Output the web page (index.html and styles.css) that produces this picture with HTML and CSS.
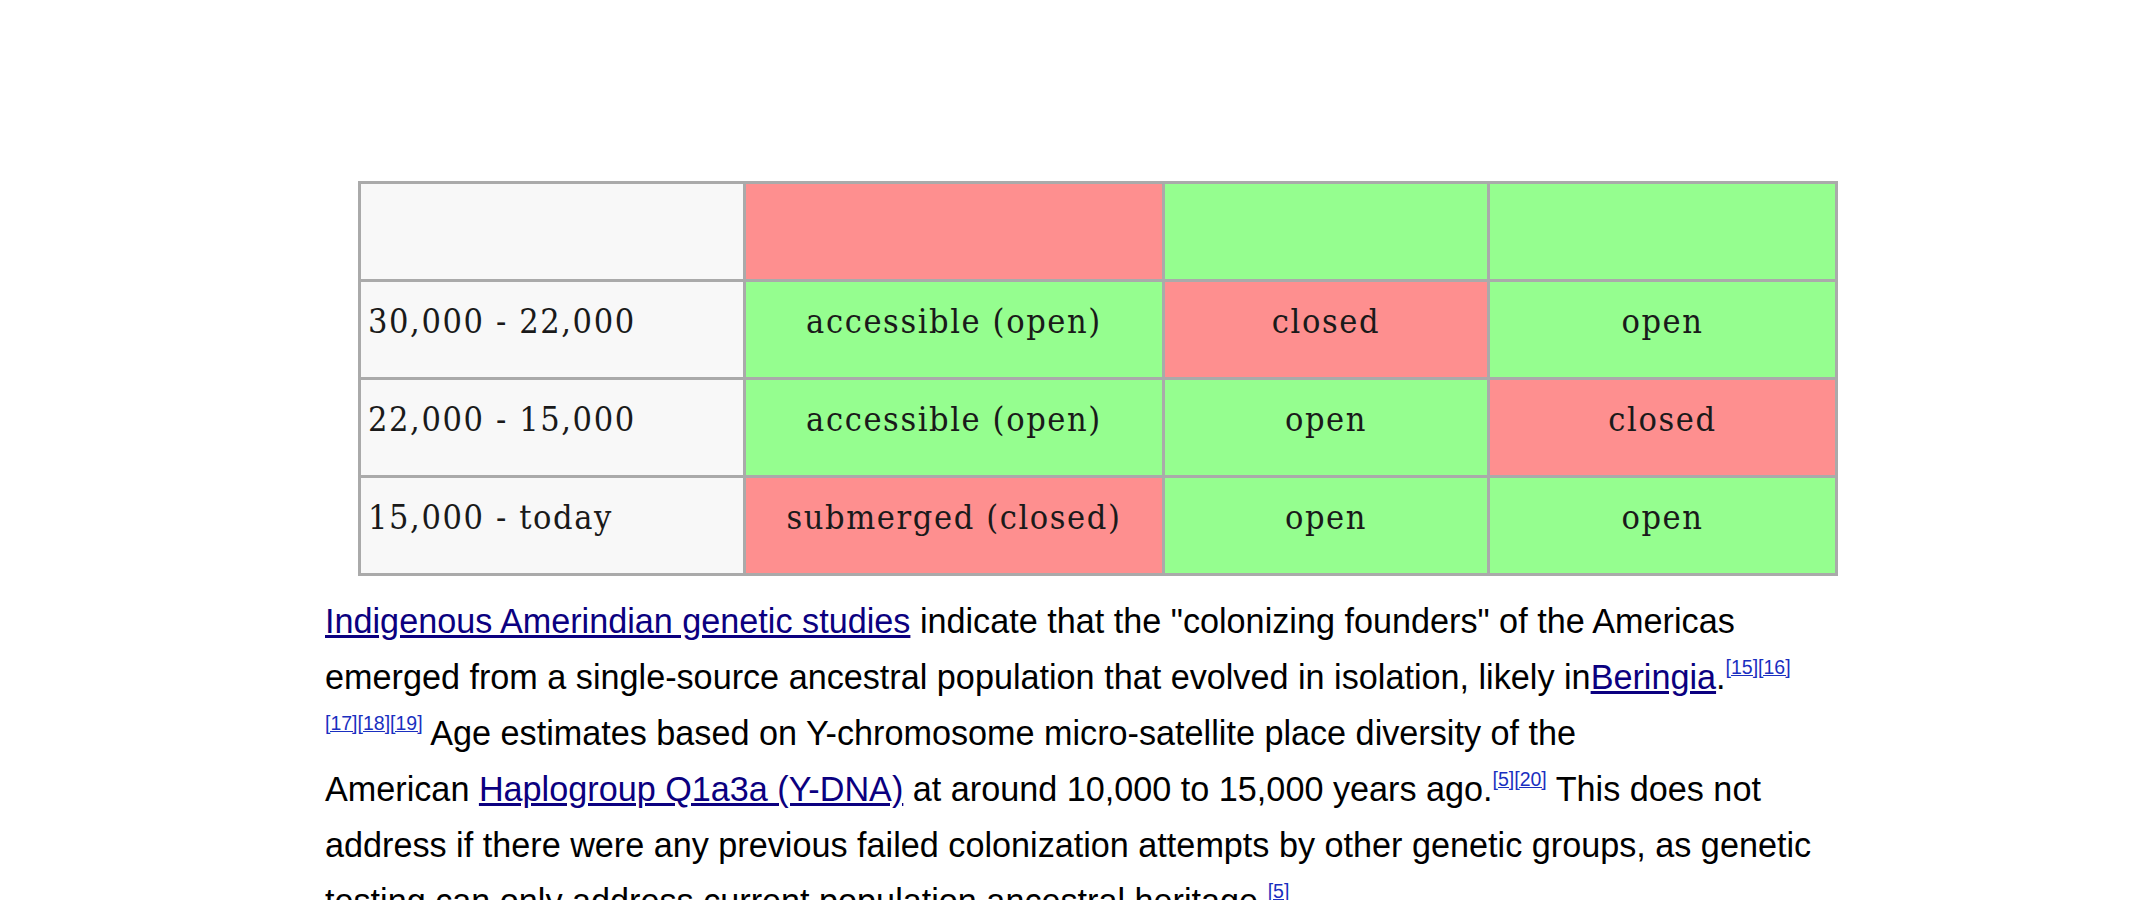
FILE: index.html
```html
<!DOCTYPE html>
<html>
<head>
<meta charset="utf-8">
<link rel="stylesheet" href="styles.css">
</head>
<body>
<div class="page">
  <table class="bridge">
    <colgroup>
      <col class="c1"><col class="c2"><col class="c3"><col class="c4">
    </colgroup>
    <tr>
      <td class="period"></td><td class="no"></td><td class="yes"></td><td class="yes"></td>
    </tr>
    <tr>
      <td class="period">30,000 - 22,000</td><td class="yes">accessible (open)</td><td class="no">closed</td><td class="yes">open</td>
    </tr>
    <tr>
      <td class="period">22,000 - 15,000</td><td class="yes">accessible (open)</td><td class="yes">open</td><td class="no">closed</td>
    </tr>
    <tr>
      <td class="period">15,000 - today</td><td class="no">submerged (closed)</td><td class="yes">open</td><td class="yes">open</td>
    </tr>
  </table>
  <p class="text"><a class="link" href="#">Indigenous Amerindian genetic studies</a> indicate that the "colonizing founders" of the Americas emerged from a single-source ancestral population that evolved in isolation, likely in<a class="link" href="#">Beringia</a>.<sup><a class="ref" href="#">[15]</a></sup><sup><a class="ref" href="#">[16]</a></sup><sup><a class="ref" href="#">[17]</a></sup><sup><a class="ref" href="#">[18]</a></sup><sup><a class="ref" href="#">[19]</a></sup> Age estimates based on Y-chromosome micro-satellite place diversity of the<br>American <a class="link" href="#">Haplogroup Q1a3a (Y-DNA)</a> at around 10,000 to 15,000 years ago.<sup><a class="ref" href="#">[5]</a></sup><sup><a class="ref" href="#">[20]</a></sup> This does not address if there were any previous failed colonization attempts by other genetic groups, as genetic testing can only address current population ancestral heritage.<sup><a class="ref" href="#">[5]</a></sup></p>
</div>
</body>
</html>
```
FILE: styles.css
```css
html, body {
  margin: 0;
  padding: 0;
  background: #ffffff;
}
.page {
  padding: 181px 0 0 325px;
  width: 1495px;
}
.bridge {
  margin-left: 33px;
  border-collapse: collapse;
  table-layout: fixed;
  width: 1477px;
  font-family: "DejaVu Serif Condensed", "DejaVu Serif", serif;
  font-stretch: condensed;
  font-size: 34px;
  letter-spacing: 1.6px;
  color: #1a1a1a;
}
.c1 { width: 385px; }
.c2 { width: 419px; }
.c3 { width: 325px; }
.c4 { width: 348px; }
.bridge td {
  border: 3px solid #aaaaaa;
  height: 77px;
  padding: 0 6px 18px 6px;
  vertical-align: middle;
  text-align: center;
  white-space: nowrap;
}
.bridge td.period {
  background: #f8f8f8;
  text-align: left;
  padding-left: 7px;
}
.bridge td.yes { background: #95fe8f; }
.bridge td.no { background: #fe8f8f; }
.text {
  margin: 17px 0 0 0;
  font-family: "Liberation Sans", Arial, sans-serif;
  font-size: 34.2px;
  line-height: 56px;
  color: #000;
}
.link {
  color: #0b0080;
  text-decoration: underline;
}
sup {
  font-size: 19.5px;
  line-height: 0;
  vertical-align: 0;
  position: relative;
  top: -15px;
}
.ref {
  color: #1a2fc0;
  text-decoration: underline;
}
```
